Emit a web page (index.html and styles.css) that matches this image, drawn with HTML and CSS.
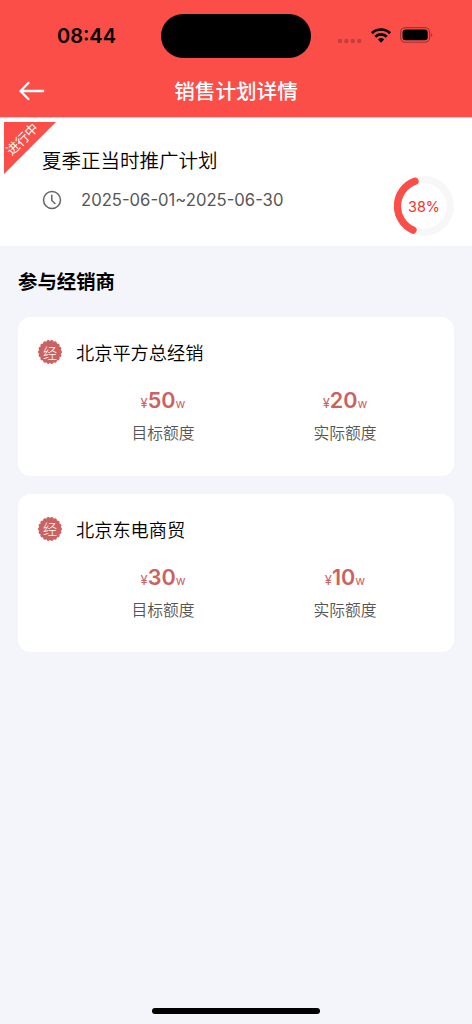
FILE: index.html
```html
<!DOCTYPE html>
<html lang="zh-CN">
<head>
<meta charset="utf-8">
<title>销售计划详情</title>
<link rel="stylesheet" href="styles.css">
</head>
<body>
<svg width="0" height="0" class="defs">
  <symbol id="seal" viewBox="0 0 26 26">
    <circle cx="13" cy="13" r="11" fill="#cb6262"/>
    <circle cx="13" cy="13" r="10.4" fill="none" stroke="#cb6262" stroke-width="3.3" stroke-linecap="round" pathLength="180" stroke-dasharray="0.01 9.99"/>
  </symbol>
</svg>
<div class="screen">
  <header class="header">
    <div class="status">
      <div class="time">08:44</div>
      <div class="island"></div>
      <div class="indicators">
        <svg class="dots" width="26" height="6" viewBox="0 0 26 6" fill="#c63d3b"><circle cx="3" cy="3" r="2.2"/><circle cx="9.4" cy="3" r="2.2"/><circle cx="15.8" cy="3" r="2.2"/><circle cx="22.2" cy="3" r="2.2"/></svg>
        <svg class="wifi" width="20" height="15" viewBox="0 0 20 15" fill="none" stroke="#000" stroke-width="2.7"><path d="M.9 5.2a13 13 0 0 1 18.2 0M4.2 8.7a8.3 8.3 0 0 1 11.6 0"/><path d="M10 14.7 6.9 11.5a4.5 4.5 0 0 1 6.2 0Z" fill="#000" stroke="none"/></svg>
        <svg class="battery" width="33" height="16" viewBox="0 0 33 16"><rect x=".6" y=".6" width="29" height="14.6" rx="4.6" fill="none" stroke="#a03431" stroke-width="1.1"/><rect x="2.5" y="2.5" width="25.2" height="10.8" rx="3" fill="#000"/><path d="M31.1 5.7a2.6 2.6 0 0 1 0 4.4Z" fill="#a03431"/></svg>
      </div>
    </div>
    <div class="navbar">
      <svg class="back" width="26" height="20" viewBox="0 0 26 20" fill="none" stroke="#fff" stroke-width="2.3" stroke-linecap="round" stroke-linejoin="round"><path d="M9.4 2 1.5 10l7.9 8M1.8 10h22.4"/></svg>
      <h1 class="nav-title">销售计划详情</h1>
    </div>
  </header>

  <section class="plan">
    <div class="ribbon"><span class="ribbon-text">进行中</span></div>
    <div class="plan-info">
      <h2 class="plan-name">夏季正当时推广计划</h2>
      <div class="period">
        <svg width="20" height="20" viewBox="0 0 20 20" fill="none" stroke="#666" stroke-width="1.5" stroke-linecap="round" stroke-linejoin="round"><circle cx="10" cy="10" r="8.5"/><path d="M9.8 5.3v5.2l3.2 3"/></svg>
        <span class="dates">2025-06-01~2025-06-30</span>
      </div>
    </div>
    <div class="progress">
      <svg width="60" height="60" viewBox="0 0 60 60" fill="none" stroke-width="7.3"><circle cx="30" cy="30" r="26.3" stroke="#f7f7f7"/><path d="M21 5.3A26.3 26.3 0 0 0 19 54.1" stroke="#fb4e49" stroke-linecap="round"/></svg>
      <span class="percent">38%</span>
    </div>
  </section>

  <main class="dealers">
    <h2 class="section-title">参与经销商</h2>
    <article class="card">
      <div class="dealer"><span class="badge"><svg width="26" height="26"><use href="#seal"/></svg><span class="badge-text">经</span></span><h3 class="dealer-name">北京平方总经销</h3></div>
      <div class="stats">
        <div class="stat"><div class="amount"><small class="yen">¥</small><b>50</b><small>w</small></div><div class="label">目标额度</div></div>
        <div class="stat"><div class="amount"><small class="yen">¥</small><b>20</b><small>w</small></div><div class="label">实际额度</div></div>
      </div>
    </article>
    <article class="card">
      <div class="dealer"><span class="badge"><svg width="26" height="26"><use href="#seal"/></svg><span class="badge-text">经</span></span><h3 class="dealer-name">北京东电商贸</h3></div>
      <div class="stats">
        <div class="stat"><div class="amount"><small class="yen">¥</small><b>30</b><small>w</small></div><div class="label">目标额度</div></div>
        <div class="stat"><div class="amount"><small class="yen">¥</small><b>10</b><small>w</small></div><div class="label">实际额度</div></div>
      </div>
    </article>
  </main>
  <div class="home-bar"></div>
</div>
</body>
</html>
```

FILE: styles.css
```css
* { box-sizing: border-box; }
body {
  margin: 0;
  background: #f4f5fa;
  color: #000;
  font-family: Inter, "Noto Sans CJK SC", sans-serif;
}
h1, h2, h3 { margin: 0; font-weight: 350; }
svg { display: block; flex: none; }
.defs { position: absolute; }
.screen {
  display: flex;
  flex-direction: column;
  width: 472px;
  height: 1024px;
  overflow: hidden;
}

.header {
  position: relative;
  z-index: 1;
  height: 117px;
  flex: none;
  background: #fb4e49;
  box-shadow: 0 1px 0 #fdc5c3;
}
.status { display: flex; height: 64px; padding-top: 14px; }
.time {
  width: 161px;
  padding-left: 57px;
  font-size: 20px;
  line-height: 44px;
  font-weight: 600;
}
.island { width: 150px; height: 44px; border-radius: 22px; background: #000; }
.indicators { display: flex; padding-left: 26px; }
.dots { margin-top: 24px; }
.wifi { margin: 14px 0 0 8px; }
.battery { margin: 13px 0 0 9px; }
.navbar {
  display: grid;
  grid-template-columns: 60px 1fr 60px;
  align-items: center;
  height: 53px;
}
.back { margin-left: 19px; }
.nav-title {
  padding-top: 2px;
  color: #fff;
  font-size: 20.6px;
  line-height: 30px;
  font-weight: 500;
  text-align: center;
}

.plan {
  position: relative;
  display: flex;
  justify-content: space-between;
  height: 129px;
  flex: none;
  padding: 29px 18px 0 42px;
  background: #fff;
}
.ribbon {
  position: absolute;
  left: 4px;
  top: 5px;
  width: 52px;
  height: 52px;
  background: #fb4e49;
  clip-path: polygon(0 0, 100% 0, 0 100%);
}
.ribbon-text {
  position: absolute;
  left: -12px;
  top: 7px;
  width: 60px;
  color: #fff;
  font-size: 13px;
  line-height: 20px;
  text-align: center;
  transform: rotate(-45deg);
}
.plan-name { font-size: 19.5px; line-height: 30px; }
.period { display: flex; align-items: center; gap: 19px; margin-top: 12px; height: 24px; }
.dates { color: #555; font-size: 16.65px; line-height: 24px; }
.progress { display: grid; width: 60px; height: 60px; margin-top: 30px; }
.progress > * { grid-area: 1 / 1; }
.percent { place-self: center; padding-top: 1px; color: #fb2f2a; font-size: 14.4px; line-height: 20px; }

.dealers { flex: 1; padding: 21px 18px 0; }
.section-title { font-size: 19.4px; line-height: 30px; font-weight: 600; }
.card {
  height: 158.5px;
  margin-top: 20px;
  padding: 22px 16px 0 19px;
  border-radius: 13px;
  background: #fff;
}
.card + .card { margin-top: 18px; }
.dealer { display: flex; align-items: center; gap: 13px; height: 26px; }
.badge { display: grid; width: 26px; height: 26px; }
.badge > * { grid-area: 1 / 1; }
.badge-text { place-self: center; padding-top: 1px; color: #fff; font-size: 14px; line-height: 20px; font-weight: 300; }
.dealer-name { padding-top: 2px; font-size: 18.2px; line-height: 26px; }
.stats { display: grid; grid-template-columns: 182px 182px; padding-left: 35px; margin-top: 20px; }
.stat { text-align: center; }
.amount { height: 30px; color: #cb6262; line-height: 30px; font-size: 21.6px; }
.amount b { font-weight: 600; }
.amount small { font-size: 12px; }
.amount .yen { font-size: 13px; }
.label { margin-top: 7px; color: #555; font-size: 15.8px; line-height: 24px; font-weight: 350; }
.home-bar { flex: none; width: 168px; height: 6px; margin: 0 auto 10px; border-radius: 3px; background: #000; }
```
